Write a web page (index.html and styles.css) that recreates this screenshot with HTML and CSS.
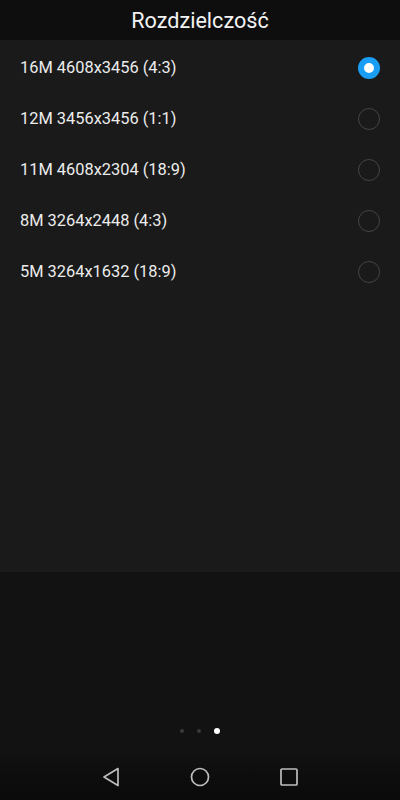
FILE: index.html
```html
<!DOCTYPE html>
<html>
<head>
    <meta charset="utf-8">
    <title>Rozdzielczość</title>
    <link rel="stylesheet" href="styles.css">
</head>
<body>
    <div class="screen">
        <div class="header">Rozdzielczość</div>
        <div class="panel">
            <div class="row"><span>16M 4608x3456 (4:3)</span><span class="radio on"></span></div>
            <div class="row"><span>12M 3456x3456 (1:1)</span><span class="radio"></span></div>
            <div class="row"><span>11M 4608x2304 (18:9)</span><span class="radio"></span></div>
            <div class="row"><span>8M 3264x2448 (4:3)</span><span class="radio"></span></div>
            <div class="row"><span>5M 3264x1632 (18:9)</span><span class="radio"></span></div>
        </div>
        <div class="lower">
            <div class="dots">
                <span class="dot"></span>
                <span class="dot"></span>
                <span class="dot active"></span>
            </div>
        </div>
        <div class="navbar">
            <svg width="18" height="20" viewBox="0 0 18 20"><path d="M16 1.5 L2 10 L16 18.5 Z" fill="none" stroke="#bdbdbd" stroke-width="1.7" stroke-linejoin="round"/></svg>
            <svg width="20" height="20" viewBox="0 0 20 20"><circle cx="10" cy="10" r="8.5" fill="none" stroke="#bdbdbd" stroke-width="1.7"/></svg>
            <svg width="18" height="18" viewBox="0 0 18 18"><rect x="1" y="1" width="16" height="16" rx="1" fill="none" stroke="#bdbdbd" stroke-width="1.7"/></svg>
        </div>
    </div>
</body>
</html>
```
FILE: styles.css
```css
body{
    margin:0;
    background:#121212;
    font-family:Roboto, "Noto Sans", sans-serif;
    color:#f0f0f0;
}
.screen{
    width:400px;
    height:800px;
    display:flex;
    flex-direction:column;
}
.header{
    height:40px;
    background:#0e0e0e;
    font-size:21.6px;
    line-height:42px;
    text-align:center;
    color:#f2f2f2;
}
.panel{
    height:532px;
    background:#1a1a1a;
    padding-top:2px;
    box-sizing:border-box;
}
.row{
    height:51px;
    display:flex;
    align-items:center;
    justify-content:space-between;
    padding:0 20px 0 20px;
    font-size:16.4px;
    color:#ececec;
}
.radio{
    width:20px;
    height:20px;
    border:1px solid #444;
    border-radius:50%;
    box-sizing:content-box;
}
.radio.on{
    width:10px;
    height:10px;
    border:6px solid #1a9ef5;
    background:#fff;
}
.lower{
    flex:1;
    display:flex;
    align-items:flex-end;
    justify-content:center;
    padding-bottom:18px;
}
.dots{
    display:flex;
    align-items:center;
    gap:13px;
}
.dot{
    width:4px;
    height:4px;
    border-radius:50%;
    background:#3a3a3a;
}
.dot.active{
    width:6px;
    height:6px;
    background:#fff;
}
.navbar{
    height:48px;
    background:linear-gradient(#121212, #0d0d0d 50%, #0a0a0a);
    display:flex;
    align-items:center;
    justify-content:center;
    gap:70px;
    padding-top:2px;
    box-sizing:border-box;
}
```
